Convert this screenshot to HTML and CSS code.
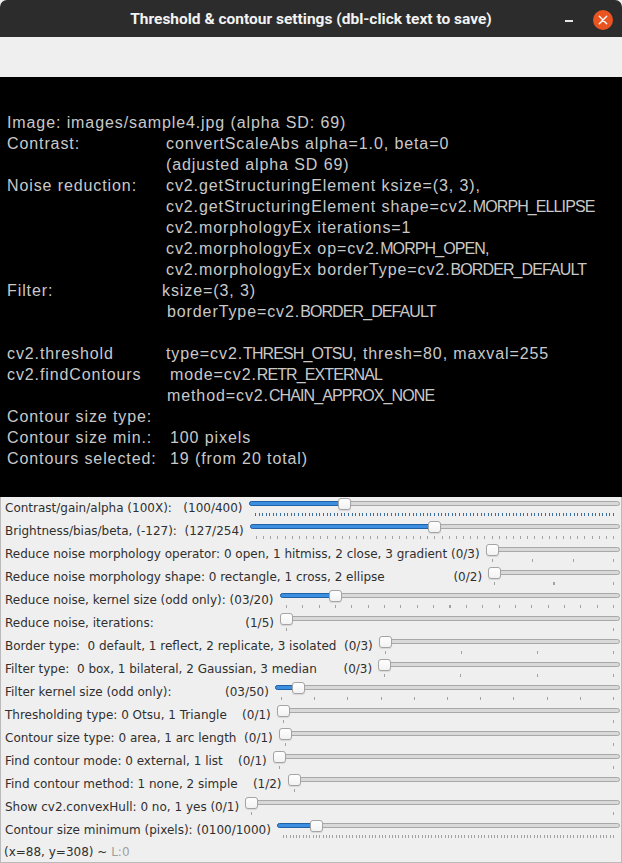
FILE: index.html
```html
<!DOCTYPE html>
<html>
<head>
<meta charset="utf-8">
<title>Threshold &amp; contour settings</title>
<link rel="stylesheet" href="styles.css">
</head>
<body>
<div class="window">
  <header class="titlebar">
    <span class="title">Threshold &amp; contour settings (dbl-click text to save)</span>
    <div class="buttons">
      <span class="min"></span>
      <span class="close"><svg width="20" height="20" viewBox="0 0 20 20"><path d="M6.3 6.3 L13.7 13.7 M13.7 6.3 L6.3 13.7" stroke="#fff" stroke-width="1.4" stroke-linecap="round"/></svg></span>
    </div>
  </header>
  <div class="toolbar"></div>
  <div class="canvas">
    <div class="line">Image: images/sample4.jpg (alpha SD: 69)</div>
    <div class="line"><span class="key">Contrast:</span><span class="val">convertScaleAbs alpha=1.0, beta=0</span></div>
    <div class="line"><span class="key"></span><span class="val">(adjusted alpha SD 69)</span></div>
    <div class="line"><span class="key">Noise reduction:</span><span class="val">cv2.getStructuringElement ksize=(3, 3),</span></div>
    <div class="line"><span class="key"></span><span class="val">cv2.getStructuringElement shape=cv2.<span class="uc">MORPH_ELLIPSE</span></span></div>
    <div class="line"><span class="key"></span><span class="val">cv2.morphologyEx iterations=1</span></div>
    <div class="line"><span class="key"></span><span class="val">cv2.morphologyEx op=cv2.<span class="uc">MORPH_OPEN</span>,</span></div>
    <div class="line"><span class="key"></span><span class="val">cv2.morphologyEx borderType=cv2.<span class="uc">BORDER_DEFAULT</span></span></div>
    <div class="line"><span class="key">Filter:</span><span class="val nudge-l">ksize=(3, 3)</span></div>
    <div class="line"><span class="key"></span><span class="val nudge-r1">borderType=cv2.<span class="uc">BORDER_DEFAULT</span></span></div>
    <div class="line"></div>
    <div class="line"><span class="key">cv2.threshold</span><span class="val">type=cv2.<span class="uc">THRESH_OTSU</span>, thresh=80, maxval=255</span></div>
    <div class="line"><span class="key">cv2.findContours</span><span class="val nudge-r">mode=cv2.<span class="uc">RETR_EXTERNAL</span></span></div>
    <div class="line"><span class="key"></span><span class="val nudge-r1">method=cv2.<span class="uc">CHAIN_APPROX_NONE</span></span></div>
    <div class="line"><span class="key">Contour size type:</span></div>
    <div class="line"><span class="key">Contour size min.:</span><span class="val nudge-r">100 pixels</span></div>
    <div class="line"><span class="key">Contours selected:</span><span class="val nudge-r">19 (from 20 total)</span></div>
  </div>
  <div class="controls">
    <div class="row"><span class="label">Contrast/gain/alpha (100X):   (100/400)</span><div class="slider focus" style="--v:0.25;--n:100"><div class="groove"><div class="fill"></div></div><div class="handle"></div><div class="ticks"></div></div></div>
    <div class="row"><span class="label">Brightness/bias/beta, (-127):  (127/254)</span><div class="slider" style="--v:0.5;--n:50"><div class="groove"><div class="fill"></div></div><div class="handle"></div><div class="ticks"></div></div></div>
    <div class="row"><span class="label">Reduce noise morphology operator: 0 open, 1 hitmiss, 2 close, 3 gradient (0/3)</span><div class="slider" style="--v:0;--n:3"><div class="groove"></div><div class="handle"></div><div class="ticks"></div></div></div>
    <div class="row"><span class="label">Reduce noise morphology shape: 0 rectangle, 1 cross, 2 ellipse                  (0/2)</span><div class="slider" style="--v:0;--n:2"><div class="groove"></div><div class="handle"></div><div class="ticks"></div></div></div>
    <div class="row"><span class="label">Reduce noise, kernel size (odd only): (03/20)</span><div class="slider" style="--v:0.15;--n:20"><div class="groove"><div class="fill"></div></div><div class="handle"></div><div class="ticks"></div></div></div>
    <div class="row"><span class="label">Reduce noise, iterations:                        (1/5)</span><div class="slider" style="--v:0;--n:1"><div class="groove"></div><div class="handle"></div><div class="ticks"></div></div></div>
    <div class="row"><span class="label">Border type:  0 default, 1 reflect, 2 replicate, 3 isolated  (0/3)</span><div class="slider" style="--v:0;--n:3"><div class="groove"></div><div class="handle"></div><div class="ticks"></div></div></div>
    <div class="row"><span class="label">Filter type:  0 box, 1 bilateral, 2 Gaussian, 3 median       (0/3)</span><div class="slider" style="--v:0;--n:3"><div class="groove"></div><div class="handle"></div><div class="ticks"></div></div></div>
    <div class="row"><span class="label">Filter kernel size (odd only):              (03/50)</span><div class="slider" style="--v:0.05;--n:10"><div class="groove"><div class="fill"></div></div><div class="handle"></div><div class="ticks"></div></div></div>
    <div class="row"><span class="label">Thresholding type: 0 Otsu, 1 Triangle    (0/1)</span><div class="slider" style="--v:0;--n:1"><div class="groove"></div><div class="handle"></div><div class="ticks"></div></div></div>
    <div class="row"><span class="label">Contour size type: 0 area, 1 arc length  (0/1)</span><div class="slider" style="--v:0;--n:1"><div class="groove"></div><div class="handle"></div><div class="ticks"></div></div></div>
    <div class="row"><span class="label">Find contour mode: 0 external, 1 list    (0/1)</span><div class="slider" style="--v:0;--n:1"><div class="groove"></div><div class="handle"></div><div class="ticks"></div></div></div>
    <div class="row"><span class="label">Find contour method: 1 none, 2 simple    (1/2)</span><div class="slider" style="--v:0;--n:1"><div class="groove"></div><div class="handle"></div><div class="ticks start-only"></div></div></div>
    <div class="row"><span class="label">Show cv2.convexHull: 0 no, 1 yes (0/1)</span><div class="slider" style="--v:0;--n:1"><div class="groove"></div><div class="handle"></div><div class="ticks"></div></div></div>
    <div class="row"><span class="label">Contour size minimum (pixels): (0100/1000)</span><div class="slider" style="--v:0.1;--n:100"><div class="groove"><div class="fill"></div></div><div class="handle"></div><div class="ticks"></div></div></div>
  </div>
  <div class="status">(x=88, y=308) ~ <span class="dim">L:0</span></div>
</div>
</body>
</html>
```
FILE: styles.css
```css
html, body {
  margin: 0;
  padding: 0;
  background: #efefef;
}

.window {
  width: 622px;
  height: 863px;
  display: flex;
  flex-direction: column;
  background: #efefef;
  overflow: hidden;
}

.titlebar {
  height: 37px;
  box-sizing: border-box;
  padding-top: 1px;
  background: #2c2c2c;
  border-radius: 7px 7px 0 0;
  display: grid;
  grid-template-columns: 1fr auto 1fr;
  align-items: center;
  color: #f2f2f2;
  flex: none;
}

.title {
  grid-column: 2;
  font-family: Roboto, "Noto Sans", sans-serif;
  font-weight: bold;
  font-size: 15.5px;
}

.buttons {
  grid-column: 3;
  justify-self: end;
  display: flex;
  align-items: center;
  gap: 20px;
  padding-right: 9px;
  margin-top: 2px;
}

.min {
  width: 8px;
  height: 2px;
  background: #e6e6e6;
  margin-top: 2px;
}

.close {
  width: 20px;
  height: 20px;
  border-radius: 50%;
  background: #e95420;
  display: flex;
}

.toolbar {
  height: 40px;
  flex: none;
  background: #efefef;
}

.canvas {
  height: 420px;
  flex: none;
  box-sizing: border-box;
  background: #000;
  padding: 35px 0 0 7px;
  font-family: "Liberation Sans", Arial, sans-serif;
  font-size: 16px;
  letter-spacing: 0.9px;
  color: #c9c9c9;
  line-height: 21px;
}

.line {
  display: flex;
  height: 21px;
  white-space: pre;
}

.key {
  width: 159px;
  flex: none;
}

.uc {
  letter-spacing: -0.9px;
}

.nudge-l { margin-left: -4px; }
.nudge-r { margin-left: 4px; }
.nudge-r1 { margin-left: 1px; }

.controls {
  flex: none;
  border-left: 1px solid #bababa;
  border-right: 1px solid #bababa;
}

.row {
  display: flex;
  height: 23px;
}

.label {
  font-family: "DejaVu Sans", sans-serif;
  font-size: 12px;
  line-height: 23px;
  color: #2f2f2f;
  white-space: pre;
  padding-left: 4px;
  margin-right: 6px;
  flex: none;
}

.slider {
  flex: 1;
  position: relative;
  margin-right: 1px;
  --tick: #a2a2a2;
}

.slider.focus {
  --tick: #3d6f9e;
}

.groove {
  margin-top: 4px;
  height: 5px;
  box-sizing: border-box;
  border: 1px solid #a8a8a8;
  background: #d9d9d9;
  border-radius: 3px;
}

.fill {
  margin: -1px 0 0 -1px;
  height: 5px;
  box-sizing: border-box;
  width: calc(7px + var(--v) * (100% - 11px));
  border: 1px solid #2161a6;
  background: #3b8ee0;
  border-radius: 3px;
}

.handle {
  position: absolute;
  top: 1px;
  left: calc(var(--v) * (100% - 13px));
  width: 13px;
  height: 12px;
  box-sizing: border-box;
  border: 1px solid #a4a4a4;
  border-radius: 3px;
  background: linear-gradient(#fefefe, #f2f2f2);
  box-shadow: 0 1px 1px rgba(0, 0, 0, 0.1);
}

.ticks {
  margin: 7px 6px 0;
  height: 3px;
  background: repeating-linear-gradient(to right, var(--tick) 0, var(--tick) 1px, transparent 1px, transparent calc((100% - 1px) / var(--n)));
}

.ticks.start-only {
  background: linear-gradient(to right, var(--tick) 0, var(--tick) 1px, transparent 1px);
}

.status {
  height: 20px;
  flex: none;
  font-family: "DejaVu Sans", sans-serif;
  font-size: 12px;
  line-height: 20px;
  color: #2f2f2f;
  padding-left: 3px;
  border-left: 1px solid #bababa;
  border-right: 1px solid #bababa;
  border-bottom: 1px solid #bababa;
}

.dim {
  color: #a0a0a0;
}
```
